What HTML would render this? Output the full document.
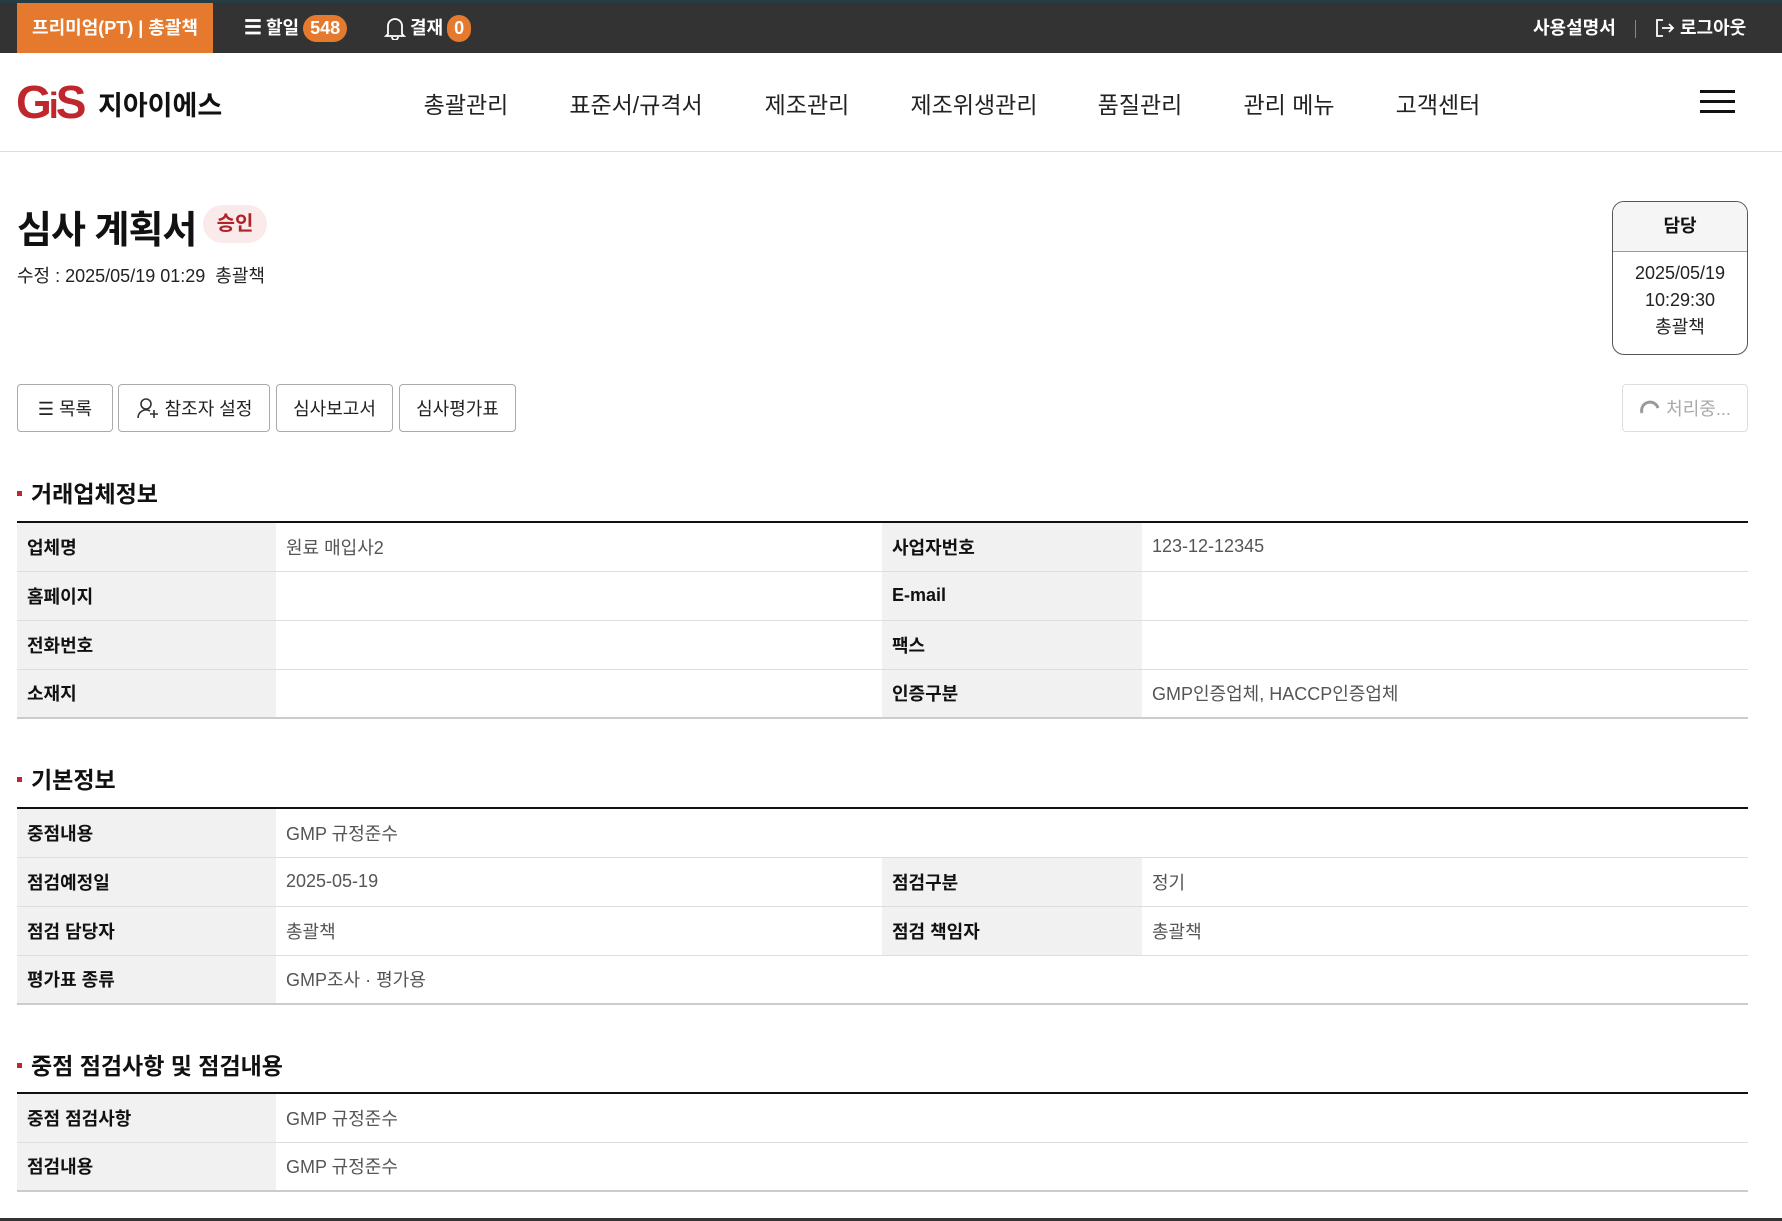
<!DOCTYPE html>
<html><head><meta charset="utf-8"><style>
*{box-sizing:border-box;margin:0;padding:0}
body{width:1782px;height:1221px;overflow:hidden;background:#fff;font-family:"Liberation Sans","Noto Sans CJK KR",sans-serif;color:#111;position:relative}
.top{position:absolute;left:0;top:0;width:1782px;height:53px;background:#333;border-top:3px solid #263c44}
.top .prem{position:absolute;left:17px;top:0;width:196px;height:50px;background:#e57a2e;color:#fff;font-weight:bold;font-size:18px;line-height:50px;text-align:center}
.top .it{position:absolute;top:0;height:50px;line-height:50px;color:#fff;font-weight:bold;font-size:18px;display:flex;align-items:center;gap:4px}
.badge{background:#e57a2e;color:#fff;border-radius:14px;padding:0 7px;height:27px;line-height:27px;font-size:18px;display:inline-block}
.hdr{position:absolute;left:0;top:53px;width:1782px;height:99px;border-bottom:1px solid #ddd}
.nav{position:absolute;top:33px;font-size:23px;color:#222;transform:translateX(-50%);white-space:nowrap}
.abs{position:absolute}
.btn{position:absolute;top:384px;height:48px;border:1px solid #aaa;border-radius:4px;font-size:18px;color:#222;display:flex;align-items:center;justify-content:center;gap:5px;background:#fff}
.sec{position:absolute;left:17px;font-size:23px;font-weight:bold;display:flex;align-items:center}
.sec:before{content:"";width:5px;height:5px;background:#c0272d;margin-right:9px;margin-top:3px}
table{position:absolute;left:17px;width:1731px;border-collapse:collapse;table-layout:fixed;border-top:2px solid #111;border-bottom:2px solid #ccc;font-size:18px}
td{height:49px;border-bottom:1px solid #ddd;padding:0 10px;color:#555}
td.l{background:#f1f1f1;font-weight:bold;color:#111}
</style></head><body>
<div class="top">
<div class="prem">프리미엄(PT) | 총괄책</div>
<div class="it" style="left:244px"><span style="font-size:20px">☰</span> 할일 <span class="badge">548</span></div>
<div class="it" style="left:384px"><svg width="22" height="24" viewBox="0 0 22 24" fill="none" stroke="#fff" stroke-width="1.8"><path d="M4 18V10a7 7 0 0 1 14 0v8l2 2H2z"/><path d="M8 21a3 3 0 0 0 6 0"/></svg> 결재 <span class="badge">0</span></div>
<div class="it" style="left:1533px">사용설명서</div>
<div class="abs" style="left:1635px;top:17px;width:1px;height:18px;background:#888"></div>
<div class="it" style="left:1654px"><svg width="22" height="22" viewBox="0 0 22 22" fill="none" stroke="#fff" stroke-width="1.8"><path d="M9 3H3v16h6M8 11h11M15 7l4 4-4 4"/></svg> 로그아웃</div>
</div>
<div class="hdr">
<div class="abs" style="left:16px;top:24px;font-size:46px;font-weight:900;color:#c0272d;letter-spacing:-3px;font-family:'Liberation Sans',sans-serif;line-height:50px">G<span style="font-size:36px">i</span>S</div>
<div class="abs" style="left:98px;top:31px;font-size:27px;font-weight:bold;color:#111">지아이에스</div>
<div class="nav" style="left:466px">총괄관리</div>
<div class="nav" style="left:636px">표준서/규격서</div>
<div class="nav" style="left:807px">제조관리</div>
<div class="nav" style="left:974px">제조위생관리</div>
<div class="nav" style="left:1140px">품질관리</div>
<div class="nav" style="left:1289px">관리 메뉴</div>
<div class="nav" style="left:1438px">고객센터</div>
<div class="abs" style="left:1700px;top:37px;width:35px;height:3px;background:#111;box-shadow:0 10px 0 #111,0 20px 0 #111"></div>
</div>
<div class="abs" style="left:17px;top:199px;font-size:38px;font-weight:bold;letter-spacing:-1px">심사 계획서</div>
<div class="abs" style="left:203px;top:205px;width:64px;height:38px;border-radius:19px;background:#fbeaea;color:#b0222a;font-size:20px;font-weight:bold;text-align:center;line-height:38px">승인</div>
<div class="abs" style="left:17px;top:262px;font-size:18px;color:#222">수정 : 2025/05/19 01:29&nbsp; 총괄책</div>
<div class="abs" style="left:1612px;top:201px;width:136px;height:154px;border:1px solid #555;border-radius:12px;overflow:hidden;text-align:center">
<div style="height:50px;background:#f5f5f5;border-bottom:1px solid #999;line-height:48px;font-size:18px;font-weight:bold">담당</div>
<div style="font-size:18px;line-height:27px;padding-top:8px;color:#222">2025/05/19<br>10:29:30<br>총괄책</div>
</div>
<div class="btn" style="left:17px;width:96px">☰ 목록</div>
<div class="btn" style="left:118px;width:152px"><svg width="24" height="24" viewBox="0 0 24 24" fill="none" stroke="#333" stroke-width="1.6"><circle cx="10" cy="8" r="5"/><path d="M2 22a8 8 0 0 1 12-7M18 14v8M14 18h8"/></svg>참조자 설정</div>
<div class="btn" style="left:276px;width:117px">심사보고서</div>
<div class="btn" style="left:399px;width:117px">심사평가표</div>
<div class="btn" style="left:1622px;width:126px;border-color:#ddd;color:#aaa"><svg width="22" height="22" viewBox="0 0 22 22" fill="none" stroke="#999" stroke-width="3"><path d="M3 16A8 8 0 1 1 19 11"/></svg>처리중...</div>
<div class="sec" style="top:475px">거래업체정보</div>
<table style="top:521px">
<colgroup><col style="width:259px"><col style="width:606px"><col style="width:260px"><col></colgroup>
<tr><td class="l">업체명</td><td>원료 매입사2</td><td class="l">사업자번호</td><td>123-12-12345</td></tr>
<tr><td class="l">홈페이지</td><td></td><td class="l">E-mail</td><td></td></tr>
<tr><td class="l">전화번호</td><td></td><td class="l">팩스</td><td></td></tr>
<tr><td class="l">소재지</td><td></td><td class="l">인증구분</td><td>GMP인증업체, HACCP인증업체</td></tr>
</table>
<div class="sec" style="top:761px">기본정보</div>
<table style="top:807px">
<colgroup><col style="width:259px"><col style="width:606px"><col style="width:260px"><col></colgroup>
<tr><td class="l">중점내용</td><td colspan="3">GMP 규정준수</td></tr>
<tr><td class="l">점검예정일</td><td>2025-05-19</td><td class="l">점검구분</td><td>정기</td></tr>
<tr><td class="l">점검 담당자</td><td>총괄책</td><td class="l">점검 책임자</td><td>총괄책</td></tr>
<tr><td class="l">평가표 종류</td><td colspan="3">GMP조사 · 평가용</td></tr>
</table>
<div class="sec" style="top:1047px">중점 점검사항 및 점검내용</div>
<table style="top:1092px">
<colgroup><col style="width:259px"><col></colgroup>
<tr><td class="l">중점 점검사항</td><td>GMP 규정준수</td></tr>
<tr><td class="l">점검내용</td><td>GMP 규정준수</td></tr>
</table>
<div class="abs" style="left:0;top:1218px;width:1782px;height:3px;background:#333"></div>
</body></html>
